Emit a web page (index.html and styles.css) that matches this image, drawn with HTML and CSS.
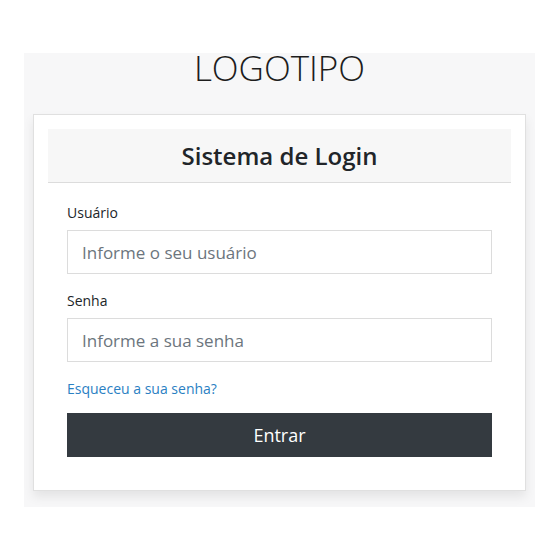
FILE: index.html
```html
<!DOCTYPE html>
<html lang="pt-BR">
<head>
<meta charset="utf-8">
<link rel="stylesheet" href="styles.css">
</head>
<body>
<div class="panel">
  <h1 class="logo">LOGOTIPO</h1>
  <div class="card">
    <div class="card-header">Sistema de Login</div>
    <form class="card-body">
      <label class="label" for="u">Usuário</label>
      <input class="input" id="u" type="text" placeholder="Informe o seu usuário">
      <label class="label" for="s">Senha</label>
      <input class="input" id="s" type="password" placeholder="Informe a sua senha">
      <a class="link" href="#">Esqueceu a sua senha?</a>
      <button class="btn" type="button">Entrar</button>
    </form>
  </div>
</div>
</body>
</html>
```
FILE: styles.css
```css
* { box-sizing: border-box; }
html, body { margin: 0; padding: 0; background: #fff; }
body {
  font-family: "Open Sans", "Noto Sans", sans-serif;
  color: #212529;
  padding-top: 53px;
}
.panel {
  width: 511px;
  margin-left: 24px;
  background: #f7f7f8;
  padding: 0 9px 16px;
}
.logo {
  margin: 0;
  height: 61px;
  font-weight: 300;
  font-size: 35px;
  line-height: 30px;
  text-align: center;
  color: #1d1d1d;
}
.card {
  background: #fff;
  border: 1px solid #e0e0e0;
  box-shadow: 0 6px 10px rgba(0,0,0,0.08);
  padding: 14px 14px 33px;
}
.card-header {
  background: #f7f7f7;
  border-bottom: 1px solid #dcdcdc;
  height: 54px;
  display: flex;
  align-items: center;
  justify-content: center;
  font-size: 24px;
  font-weight: 600;
  color: #212529;
}
.card-body {
  display: flex;
  flex-direction: column;
  padding: 17px 19px 0;
}
.label {
  font-size: 14px;
  line-height: 26px;
  color: #212529;
  margin-bottom: 4px;
}
.input {
  height: 44px;
  border: 1px solid #dcdcdc;
  font-family: inherit;
  font-size: 17px;
  padding: 0 14px;
  margin-bottom: 14px;
  color: #495057;
  background: #fff;
  border-radius: 0;
}
.input::placeholder { color: #6c757d; }
.link {
  font-size: 14px;
  color: #2a80c3;
  text-decoration: none;
  line-height: 20px;
  margin-top: 3px;
  margin-bottom: 14px;
  align-self: flex-start;
}
.btn {
  height: 44px;
  background: #343a40;
  color: #fff;
  border: 1px solid #343a40;
  font-family: inherit;
  font-size: 18px;
  border-radius: 0;
}
```
